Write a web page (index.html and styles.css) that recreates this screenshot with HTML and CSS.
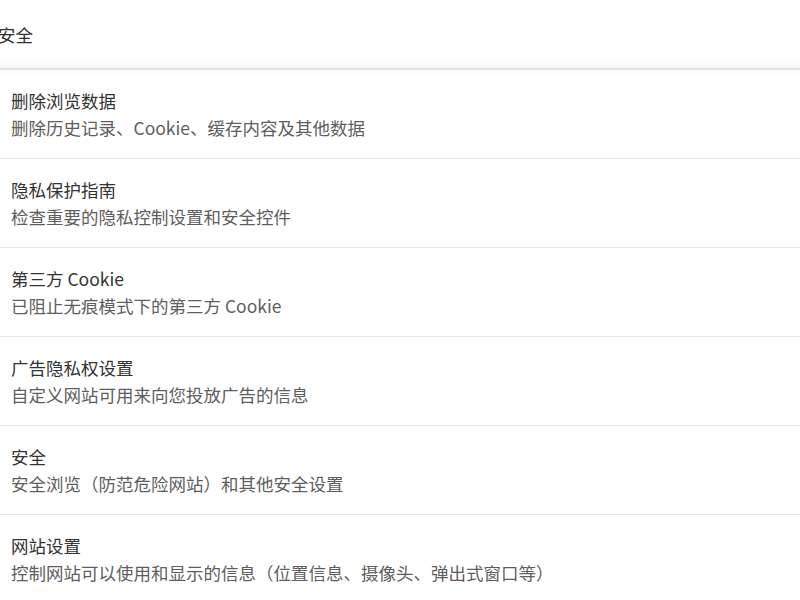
FILE: index.html
```html
<!DOCTYPE html>
<html lang="zh-CN">
<head>
<meta charset="utf-8">
<title>安全</title>
<link rel="stylesheet" href="styles.css">
</head>
<body>
<div class="page">
  <header class="header"><span class="header-title">安全</span></header>
  <ul class="list">
    <li class="row">
      <div class="row-title">删除浏览数据</div>
      <div class="row-sub">删除历史记录、Cookie、缓存内容及其他数据</div>
    </li>
    <li class="row">
      <div class="row-title">隐私保护指南</div>
      <div class="row-sub">检查重要的隐私控制设置和安全控件</div>
    </li>
    <li class="row">
      <div class="row-title">第三方 Cookie</div>
      <div class="row-sub">已阻止无痕模式下的第三方 Cookie</div>
    </li>
    <li class="row">
      <div class="row-title">广告隐私权设置</div>
      <div class="row-sub">自定义网站可用来向您投放广告的信息</div>
    </li>
    <li class="row">
      <div class="row-title">安全</div>
      <div class="row-sub">安全浏览（防范危险网站）和其他安全设置</div>
    </li>
    <li class="row">
      <div class="row-title">网站设置</div>
      <div class="row-sub">控制网站可以使用和显示的信息（位置信息、摄像头、弹出式窗口等）</div>
    </li>
  </ul>
</div>
</body>
</html>
```

FILE: styles.css
```css
html, body {
  margin: 0;
  padding: 0;
  background: #ffffff;
}
body {
  font-family: "Noto Sans CJK SC", "Noto Sans", sans-serif;
  font-size: 17.5px;
  overflow: hidden;
}
.page {
  width: 800px;
}
.header {
  height: 68px;
  display: flex;
  align-items: center;
  border-bottom: 2px solid #e2e2e2;
  box-shadow: inset 0 -10px 10px -8px rgba(0, 0, 0, 0.05);
}
.header-title {
  margin-left: -2px;
  padding-top: 2px;
  color: #2f2f2f;
  font-size: 17.5px;
  line-height: 24px;
}
.list {
  list-style: none;
  margin: 0;
  padding: 0;
}
.row {
  padding: 17px 0 17px 11px;
  border-bottom: 1px solid #e6e6e6;
}
.row:first-child {
  box-shadow: inset 0 8px 8px -8px rgba(0, 0, 0, 0.05);
}
.row-title {
  color: #333333;
  line-height: 27px;
}
.row-sub {
  color: #5e5e5e;
  line-height: 27px;
}
```
